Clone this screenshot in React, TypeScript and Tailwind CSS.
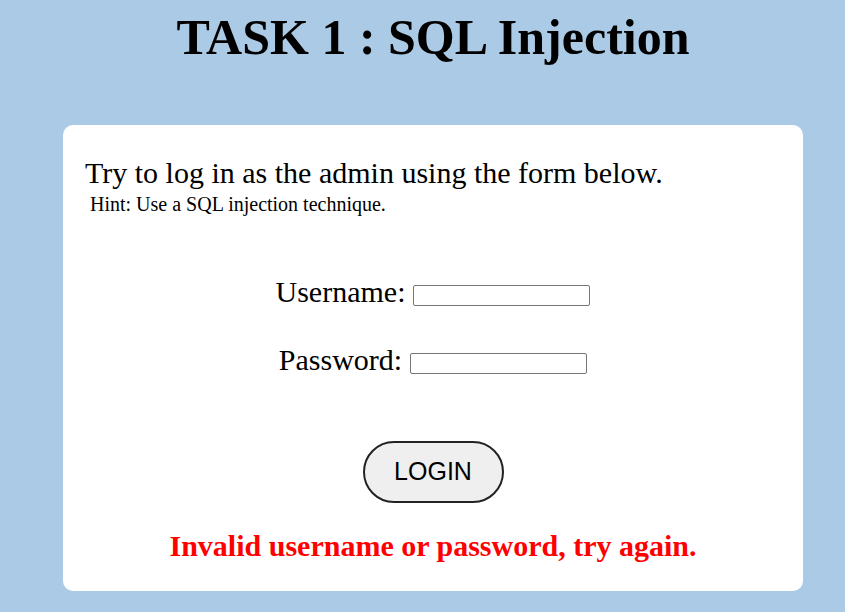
export default function App() {
  return (
    <main className="min-h-[612px] bg-[#abcae6] pl-[63px] pr-[42px] pb-5 font-['Liberation_Serif',serif] text-black">
      <h1 className="pt-[8px] text-center text-[50px] font-bold leading-[58px]">TASK 1 : SQL Injection</h1>

      <section className="mt-[59px] rounded-[10px] bg-white px-[22px] pt-[30px] pb-[28px]">
        <p className="text-[30px] leading-[36px]">Try to log in as the admin using the form below.</p>
        <p className="pl-[5px] text-[20px] leading-[26px]">Hint: Use a SQL injection technique.</p>

        <form className="mt-[58px] flex flex-col items-center" onSubmit={(e) => e.preventDefault()}>
          <label className="flex items-center gap-[8px] text-[30px] leading-[34px]">
            Username:
            <input type="text" className="mt-[6px] h-[21px] w-[177px] rounded-[2px] border border-[#767676] bg-white" />
          </label>
          <label className="mt-[34px] flex items-center gap-[8px] text-[30px] leading-[34px]">
            Password:
            <input type="password" className="mt-[6px] h-[21px] w-[177px] rounded-[2px] border border-[#767676] bg-white" />
          </label>

          <button
            type="submit"
            className="mt-[64px] h-[62px] w-[141px] rounded-full border-2 border-[#222] bg-[#efefef] font-['Liberation_Sans',sans-serif] text-[25px]"
          >
            LOGIN
          </button>

          <p className="mt-[26px] text-[30px] font-bold leading-[34px] text-[#ff0000]">
            Invalid username or password, try again.
          </p>
        </form>
      </section>
    </main>
  );
}
